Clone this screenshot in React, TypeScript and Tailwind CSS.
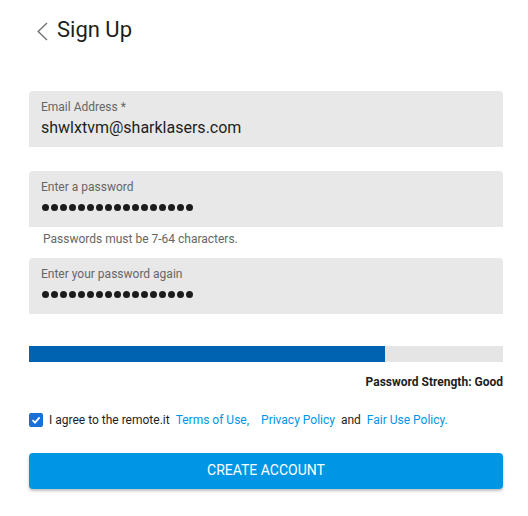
const font = { fontFamily: 'Roboto, "Noto Sans", sans-serif' }

function Dots() {
  return (
    <div className="flex gap-[2px]">
      {Array.from({ length: 17 }).map((_, i) => (
        <span key={i} className="w-[7px] h-[7px] rounded-full bg-[#1c1c1c]" />
      ))}
    </div>
  )
}

function Field({ label, children }: { label: string; children: React.ReactNode }) {
  return (
    <div className="h-[56px] bg-[#e8e8e8] rounded-t-[4px] pl-[12px] pt-[9px]">
      <div className="text-[12px] leading-[14px] text-[#666]">{label}</div>
      {children}
    </div>
  )
}

export default function App() {
  return (
    <div className="w-[528px] h-[516px] bg-white text-[#222]" style={font}>
      {/* Header */}
      <div className="flex items-start pt-[17px] pl-[37px]">
        <svg width="11" height="19" viewBox="0 0 11 19" className="mt-[5px]" fill="none">
          <polyline points="10,1 1.2,9.5 10,18" stroke="#777" strokeWidth="1.5" />
        </svg>
        <h1 className="ml-[9px] text-[22px] leading-[26px] text-[#1e1e1e]">Sign Up</h1>
      </div>

      <div className="px-[29px] mt-[48px] w-[532px]">
        <div className="w-[474px]">
          <Field label="Email Address *">
            <div className="mt-[4px] text-[16px] leading-[19px] text-[#1e1e1e]">shwlxtvm@sharklasers.com</div>
          </Field>

          <div className="mt-[24px]">
            <Field label="Enter a password">
              <div className="mt-[10px] pl-[1px]">
                <Dots />
              </div>
            </Field>
            <p className="mt-[3px] ml-[14px] text-[12px] leading-[1.66] text-[#666]">
              Passwords must be 7-64 characters.
            </p>
          </div>

          <div className="mt-[8px]">
            <Field label="Enter your password again">
              <div className="mt-[10px] pl-[1px]">
                <Dots />
              </div>
            </Field>
          </div>

          {/* Strength meter */}
          <div className="mt-[32px] h-[16px] bg-[#e5e5e5]">
            <div className="h-full w-[356px] bg-[#0063b1]" />
          </div>
          <div className="mt-[13px] text-right text-[12px] leading-[14px] font-bold text-[#1e1e1e]">
            Password Strength: Good
          </div>

          {/* Terms */}
          <div className="mt-[24px] flex items-center text-[12px] leading-[14px]">
            <span className="w-[14px] h-[14px] rounded-[2px] bg-[#1b6fd8] flex items-center justify-center">
              <svg width="10" height="10" viewBox="0 0 10 10" fill="none">
                <polyline points="1.5,5.2 4,7.6 8.6,2.4" stroke="#fff" strokeWidth="1.8" />
              </svg>
            </span>
            <span className="ml-[6px] text-[#1e1e1e]">I agree to the remote.it</span>
            <a className="ml-[6px] text-[#0096e6]">Terms of Use,</a>
            <a className="ml-[12px] text-[#0096e6]">Privacy Policy</a>
            <span className="ml-[6px] text-[#1e1e1e]">and</span>
            <a className="ml-[6px] text-[#0096e6]">Fair Use Policy.</a>
          </div>

          <button className="mt-[26px] w-full h-[36px] rounded-[4px] bg-[#0096e6] text-white text-[14px] uppercase shadow-[0_2px_3px_rgba(0,0,0,0.25)]">
            Create Account
          </button>
        </div>
      </div>
    </div>
  )
}
